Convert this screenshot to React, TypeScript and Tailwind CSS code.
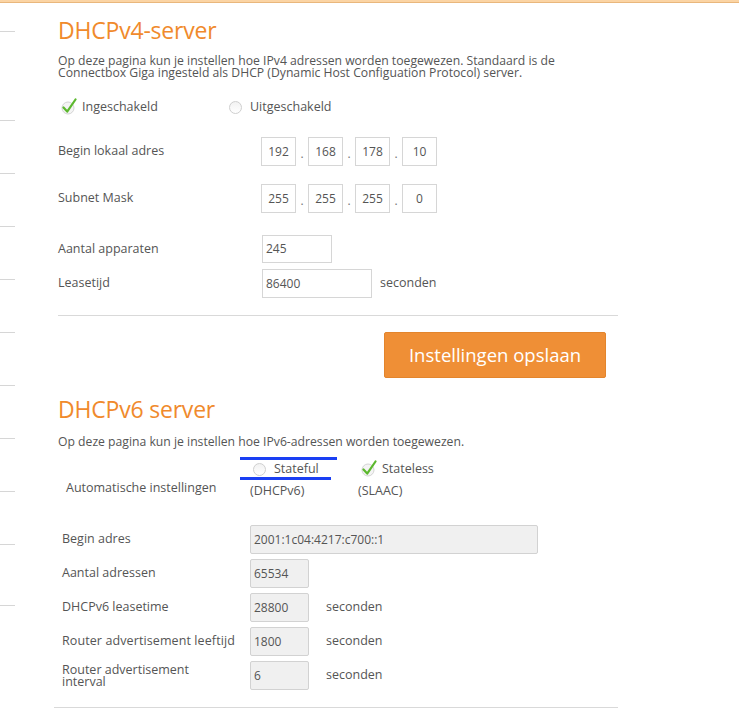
import React from "react";

const Check = () => (
  <svg width="18" height="18" viewBox="0 0 18 18" className="shrink-0">
    <circle cx="8" cy="10" r="6" fill="#f4f4f4" stroke="#d4d4d4" strokeWidth="1" />
    <path d="M3.5 9.5 L7.2 13.6 L15.5 1.5" fill="none" stroke="#5cb82e" strokeWidth="2.2" strokeLinecap="round" strokeLinejoin="round" />
  </svg>
);

const Radio = () => (
  <span className="inline-block w-[13px] h-[13px] rounded-full border border-[#cfcfcf] bg-gradient-to-b from-[#f2f2f2] to-white shrink-0" />
);

const IpBox = ({ v }: { v: string }) => (
  <div className="w-[35px] h-[29px] border border-[#d6d6d6] flex items-center justify-center text-[12px] text-[#555]">{v}</div>
);

const Dot = () => <div className="w-[12px] h-[29px] flex items-end justify-center pb-[3px] text-[12px] text-[#777]">.</div>;

const IpRow = ({ label, vals }: { label: string; vals: string[] }) => (
  <div className="flex items-center h-[29px]">
    <div className="w-[203px] text-[12.5px] text-[#555]">{label}</div>
    <IpBox v={vals[0]} />
    <Dot />
    <IpBox v={vals[1]} />
    <Dot />
    <IpBox v={vals[2]} />
    <Dot />
    <IpBox v={vals[3]} />
  </div>
);

const GrayInput = ({ v, w }: { v: string; w: string }) => (
  <div className={`${w} h-[29px] border border-[#d2d2d2] bg-[#f0f0f0] rounded-[2px] flex items-center px-[3px] text-[12px] text-[#555]`}>{v}</div>
);

export default function App() {
  return (
    <div className="min-h-[713px] bg-white font-['Open_Sans',sans-serif] text-[#555]">
      <div className="h-[3px] bg-[#fbd4a4] border-b border-[#e9b77c]" />
      <div className="flex">
        <div className="w-[15px] shrink-0 flex flex-col -mt-[3px]">
          <div className="h-[32px] border-b border-[#d6d6d6]" />
          <div className="h-[89px] border-b border-[#d6d6d6]" />
          <div className="h-[53px] border-b border-[#d6d6d6]" />
          <div className="h-[53px] border-b border-[#d6d6d6]" />
          <div className="h-[53px] border-b border-[#d6d6d6]" />
          <div className="h-[53px] border-b border-[#d6d6d6]" />
          <div className="h-[53px] border-b border-[#d6d6d6]" />
          <div className="h-[53px] border-b border-[#d6d6d6]" />
          <div className="h-[53px] border-b border-[#d6d6d6]" />
          <div className="h-[53px] border-b border-[#d6d6d6]" />
          <div className="h-[61px] border-b border-[#d6d6d6]" />
        </div>
        <div className="ml-[43px] w-[560px] flex flex-col">
          <h1 className="mt-[12px] text-[23px] leading-[30px] text-[#f08a2c] tracking-[-0.2px]">DHCPv4-server</h1>
          <p className="mt-[10px] text-[12.2px] leading-[12px] text-[#555]">
            Op deze pagina kun je instellen hoe IPv4 adressen worden toegewezen. Standaard is de
            <br />
            Connectbox Giga ingesteld als DHCP (Dynamic Host Configuation Protocol) server.
          </p>
          <div className="mt-[18px] h-[20px] flex items-center text-[12.5px]">
            <div className="flex items-center w-[171px]">
              <span className="ml-[2px]"><Check /></span>
              <span className="ml-[4px]">Ingeschakeld</span>
            </div>
            <Radio />
            <span className="ml-[8px]">Uitgeschakeld</span>
          </div>
          <div className="mt-[20px]"><IpRow label="Begin lokaal adres" vals={["192", "168", "178", "10"]} /></div>
          <div className="mt-[18px]"><IpRow label="Subnet Mask" vals={["255", "255", "255", "0"]} /></div>
          <div className="mt-[22px] flex items-center h-[28px]">
            <div className="w-[204px] text-[12.5px]">Aantal apparaten</div>
            <div className="w-[70px] h-[28px] border border-[#d6d6d6] flex items-center px-[3px] text-[12px]">245</div>
          </div>
          <div className="mt-[6px] flex items-center h-[29px]">
            <div className="w-[204px] text-[12.5px]">Leasetijd</div>
            <div className="w-[110px] h-[29px] border border-[#d6d6d6] flex items-center px-[3px] text-[12px]">86400</div>
            <span className="ml-[8px] text-[12.5px]">seconden</span>
          </div>
          <div className="mt-[17px] h-px bg-[#d9d9d9]" />
          <div className="mt-[16px] flex justify-end pr-[12px]">
            <button className="w-[222px] h-[46px] bg-[#ef8f36] border border-[#e3852d] rounded-[2px] text-white text-[18.5px]">Instellingen opslaan</button>
          </div>
          <h1 className="mt-[16px] text-[23px] leading-[30px] text-[#f08a2c] tracking-[-0.2px]">DHCPv6 server</h1>
          <p className="mt-[11px] text-[12.2px] leading-[14px]">Op deze pagina kun je instellen hoe IPv6-adressen worden toegewezen.</p>
          <div className="mt-[10px] flex">
            <div className="w-[192px] pl-[8px] pt-[20px] text-[12.5px] leading-[17px]">Automatische instellingen</div>
            <div className="w-[108px] flex flex-col">
              <div className="relative h-[20px] flex items-center pl-[3px] text-[12.5px]">
                <div className="absolute left-[-10px] top-[-2px] w-[97px] h-[3px] bg-[#1a3ff3]" />
                <Radio />
                <span className="ml-[8px]">Stateful</span>
                <div className="absolute left-[-10px] bottom-[-1px] w-[91px] h-[3px] bg-[#1a3ff3]" />
              </div>
              <div className="mt-[3px] h-[18px] flex items-center text-[12.5px]">(DHCPv6)</div>
            </div>
            <div className="flex flex-col">
              <div className="h-[20px] flex items-center text-[12.5px]">
                <span className="ml-[2px]"><Check /></span>
                <span className="ml-[4px]">Stateless</span>
              </div>
              <div className="mt-[3px] h-[18px] flex items-center text-[12.5px]">(SLAAC)</div>
            </div>
          </div>
          <div className="pl-[4px] flex flex-col gap-[5px] mt-[25px] text-[12.5px]">
            <div className="flex items-center">
              <div className="w-[188px]">Begin adres</div>
              <GrayInput v="2001:1c04:4217:c700::1" w="w-[288px]" />
            </div>
            <div className="flex items-center">
              <div className="w-[188px]">Aantal adressen</div>
              <GrayInput v="65534" w="w-[59px]" />
            </div>
            <div className="flex items-center">
              <div className="w-[188px]">DHCPv6 leasetime</div>
              <GrayInput v="28800" w="w-[59px]" />
              <span className="ml-[17px]">seconden</span>
            </div>
            <div className="flex items-center">
              <div className="w-[188px] tracking-[0.1px]">Router advertisement leeftijd</div>
              <GrayInput v="1800" w="w-[59px]" />
              <span className="ml-[17px]">seconden</span>
            </div>
            <div className="flex items-center">
              <div className="w-[188px] leading-[12px]">Router advertisement<br />interval</div>
              <GrayInput v="6" w="w-[59px]" />
              <span className="ml-[17px]">seconden</span>
            </div>
          </div>
          <div className="mt-[17px] -ml-[4px] h-px bg-[#d9d9d9] w-[564px]" />
        </div>
      </div>
    </div>
  );
}
